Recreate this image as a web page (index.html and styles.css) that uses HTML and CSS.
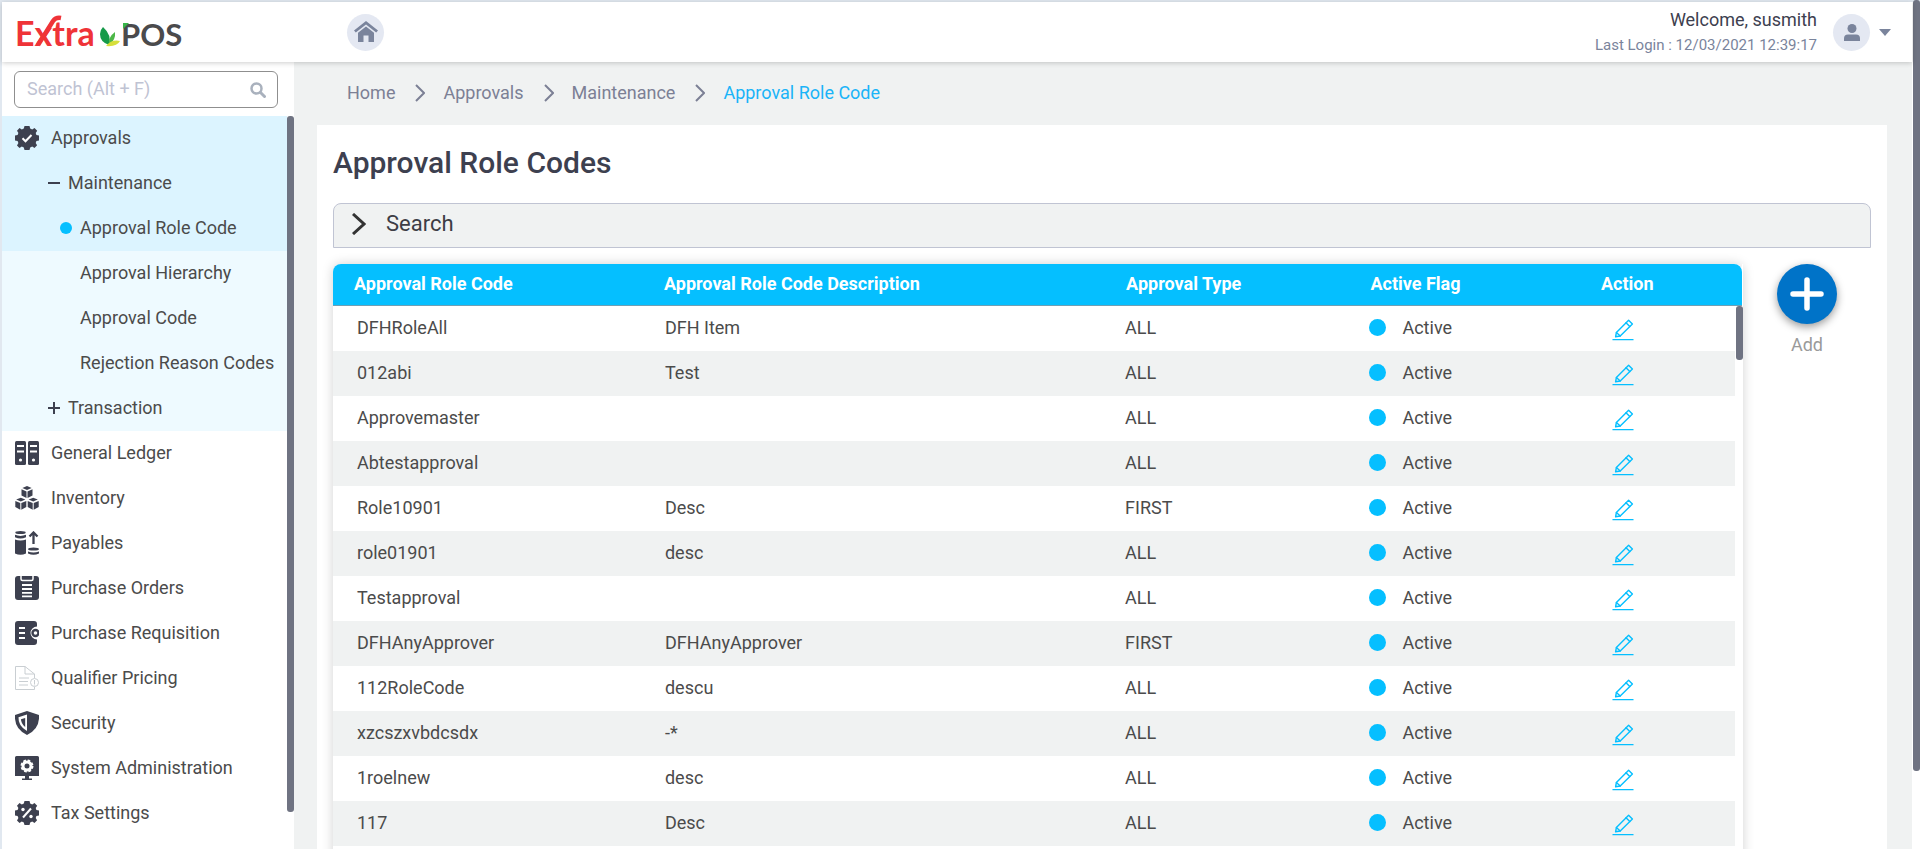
FILE: index.html
```html
<!DOCTYPE html>
<html lang="en">
<head>
<meta charset="utf-8">
<title>Approval Role Codes</title>
<link rel="stylesheet" href="styles.css">
</head>
<body>
<svg class="sprite" aria-hidden="true">
  <symbol id="i-edit" viewBox="0 0 22 22">
    <g fill="none" stroke="currentColor" stroke-width="1.4" stroke-linejoin="round" stroke-linecap="round">
      <path d="M3.6 17.8 4.4 13.400 16.600 1.200 20.400 5 8.200 17Z"/>
      <path d="M14 3.800 17.800 7.600M4.400 13.400 8.200 17"/>
      <path d="M1 20.700H21" stroke-width="1.300"/>
    </g>
  </symbol>
  <symbol id="i-cog" viewBox="0 0 24 24">
    <path fill="currentColor" d="M9.5 0h5l.7 2.6 2 .8L19.500 2l2.700 2.700-1.500 2.300.7 2 2.600.500v5l-2.600.6-.7 2 1.400 2.200L19.500 22l-2.300-1.400-2 .8-.7 2.600h-5l-.7-2.600-2-.8L4.500 22 2 19.500l1.400-2.400-.8-2L0 14.500v-5L2.600 9l.8-2L2 4.700 4.500 2l2.300 1.400 2-.8Z"/>
  </symbol>
</svg>
<div class="app">
  <header class="topbar">
    <a class="brand" href="#" aria-label="Extra POS">
      <svg class="logo" viewBox="0 0 180 60" width="180" height="60">
        <text class="logo-red" x="5" y="44">Extra</text>
        <path d="M28 43 43 19Q46 15 51 16" fill="none" stroke="#ef3338" stroke-width="4.500"/>
        <path fill="#169a49" d="M93 25q9 8 6 18q-9-3-9-11q0-4 3-7Z"/>
        <path fill="#4cb748" d="M105 30q-7 5-6 13q7-5 6-13Z"/>
        <path fill="#d6df3a" d="M96 44q6-7 14-5q-3 6-14 5Z"/>
        <text class="logo-grey" x="111" y="44">POS</text>
        <path fill="#39b54a" d="M113 21h6l-6 6Z"/>
      </svg>
    </a>
    <a class="round" href="#" aria-label="Home">
      <svg viewBox="0 0 24 22" width="24" height="22" fill="currentColor"><path d="M12 0 24 9.500 22.200 11.600 12 3.600 1.800 11.600 0 9.500Z"/><path d="M12 5.500 20 11.800V21H14.500V14.500H9.500V21H4V11.800Z"/></svg>
    </a>
    <div class="who"><span class="welcome">Welcome, susmith</span><span class="login">Last Login : 12/03/2021 12:39:17</span></div>
    <button class="account" type="button" aria-label="Account">
      <span class="round"><svg viewBox="0 0 16 17" width="16" height="17" fill="currentColor"><circle cx="8" cy="4.500" r="4.500"/><path d="M0 17v-2.500Q0 10.500 4 10.500h8q4 0 4 4V17Z"/></svg></span>
      <svg viewBox="0 0 12 7" width="12" height="7" fill="currentColor"><path d="M0 0H12L6 7Z"/></svg>
    </button>
  </header>
  <div class="body">
    <aside class="side">
      <div class="find">
        <input type="text" aria-label="Search menu" placeholder="Search (Alt + F)">
        <svg viewBox="0 0 16 16" width="16" height="16"><circle cx="6.500" cy="6.500" r="5" fill="none" stroke="#a9b1bd" stroke-width="2.500"/><path d="m10.500 10.500 4 4" stroke="#a9b1bd" stroke-width="3" stroke-linecap="round"/></svg>
      </div>
      <nav class="menu">
        <div class="group on">
          <a href="#"><svg class="ico" viewBox="0 0 24 24"><use href="#i-cog"/><path d="m7.500 12.300 3 3 6-6.300" fill="none" stroke="#fff" stroke-width="2"/></svg>Approvals</a>
          <a class="sub" href="#"><svg class="sign" viewBox="0 0 12 12"><path d="M0 6H12"/></svg>Maintenance</a>
          <a class="leaf" href="#"><span class="bullet"></span>Approval Role Code</a>
        </div>
        <div class="group open">
          <a class="leaf" href="#">Approval Hierarchy</a>
          <a class="leaf" href="#">Approval Code</a>
          <a class="leaf" href="#">Rejection Reason Codes</a>
          <a class="sub" href="#"><svg class="sign" viewBox="0 0 12 12"><path d="M0 6H12M6 0V12"/></svg>Transaction</a>
        </div>
        <div class="group">
          <a href="#"><svg class="ico" viewBox="0 0 24 24" fill="currentColor"><rect width="11" height="24" rx="1.500"/><rect x="13" width="11" height="24" rx="1.500"/><path stroke="#fff" stroke-width="2" d="M2 5H9M2 10.500H9M15 5h7M15 10.500h7"/><circle cx="5.500" cy="19" r="1.600" fill="#fff"/><circle cx="18.500" cy="19" r="1.600" fill="#fff"/></svg>General Ledger</a>
          <a href="#"><svg class="ico" viewBox="0 0 24 24" fill="currentColor"><g id="cube"><path d="m12 0 4.600 1.900L12 3.900 7.400 1.900Z"/><path d="m6.500 3.200 5 2.200V12l-5-2.600Z"/><path d="m17.500 3.200-5 2.200V12l5-2.600Z"/></g><use href="#cube" x="-6.200" y="11.700"/><use href="#cube" x="6.200" y="11.700"/></svg>Inventory</a>
          <a href="#"><svg class="ico" viewBox="0 0 24 24" fill="currentColor"><ellipse cx="5.500" cy="1.500" rx="5.200" ry="1.500"/><path d="M0 3.800q5.500 2.200 11 0v2.400q-5.500 2.400-11 0ZM0 8.500q5.500 2.200 11 0V22.500q-5.500 2.500-11 0Z"/><path d="M18.500 13V2M14.500 5.500 18.500 1.500 22.500 5.500" fill="none" stroke="currentColor" stroke-width="2.300"/><ellipse cx="18.500" cy="18" rx="5.500" ry="1.600"/><path d="M13 20.500q5.500 2 11 0v2q-5.500 2.500-11 0Z"/></svg>Payables</a>
          <a href="#"><svg class="ico" viewBox="0 0 24 24" fill="currentColor"><rect width="24" height="24" rx="3"/><path d="M6 0v3q0 1.500 1.500 1.500h9Q18 4.500 18 3V0" fill="none" stroke="#fff" stroke-width="1.500"/><path d="M7 9H17M7 13H17M7 16.800H17M7 20.300H17" stroke="#fff" stroke-width="1.800"/></svg>Purchase Orders</a>
          <a href="#"><svg class="ico" viewBox="0 0 24 24" fill="currentColor"><path d="M3 0H19q3 0 3 3V5.500a6.500 6.500 0 0 0 0 13V21q0 3-3 3H3q-3 0-3-3V3Q0 0 3 0Z"/><path d="M4 7h6M4 12h6M4 17h6" stroke="#fff" stroke-width="2"/><circle cx="20.500" cy="12" r="3" fill="none" stroke="currentColor" stroke-width="2.400"/></svg>Purchase Requisition</a>
          <a href="#"><svg class="ico pale" viewBox="0 0 24 24" fill="none" stroke="currentColor"><path d="M19.500 12V8L10 .5H.5V23.500H19.500V21M10 .5V8H19.500M4 12H14M4 15.500H13M4 19H13"/><circle cx="19.500" cy="16.500" r="4"/><path d="M19.500 14V18M19.500 18.500v1"/></svg>Qualifier Pricing</a>
          <a href="#"><svg class="ico" viewBox="0 0 24 24" fill="currentColor"><path d="M12 0 24 4Q25 18 12 24Q-1 18 0 4Z"/><path d="M12 3.500V20Q3 15 3.500 6.300Z" fill="#fff"/><path d="M10.200 7V16Q6 12.500 6 8.300Z"/></svg>Security</a>
          <a href="#"><svg class="ico" viewBox="0 0 24 24" fill="currentColor"><path d="M1.500 0h21Q24 0 24 1.500V20H14v2.500h3V24H7v-1.500h3V20H0V1.500Q0 0 1.500 0Z"/><circle cx="12" cy="10" r="5.500" fill="none" stroke="#fff" stroke-width="2" stroke-dasharray="2.600 1.720"/><circle cx="12" cy="10" r="4" fill="none" stroke="#fff" stroke-width="3"/></svg>System Administration</a>
          <a href="#"><svg class="ico" viewBox="0 0 24 24"><use href="#i-cog"/><path d="m8 16.500 8-9" stroke="#fff" stroke-width="2"/><circle cx="8" cy="8.500" r="1.700" fill="#fff"/><circle cx="16" cy="15.500" r="1.700" fill="#fff"/></svg>Tax Settings</a>
        </div>
        <span class="thumb"></span>
      </nav>
    </aside>
    <main class="main">
      <nav class="crumbs" aria-label="Breadcrumb">
        <a href="#">Home</a><svg viewBox="0 0 10 18"><path d="m1 1 8 8-8 8"/></svg>
        <a href="#">Approvals</a><svg viewBox="0 0 10 18"><path d="m1 1 8 8-8 8"/></svg>
        <a href="#">Maintenance</a><svg viewBox="0 0 10 18"><path d="m1 1 8 8-8 8"/></svg>
        <a class="here" href="#">Approval Role Code</a>
      </nav>
      <section class="card">
        <h1>Approval Role Codes</h1>
        <button class="panel" type="button"><svg viewBox="0 0 14 22"><path d="m1 1 11 10L1 21"/></svg>Search</button>
        <div class="content">
          <div class="grid">
            <table>
              <colgroup><col class="c1"><col class="c2"><col class="c3"><col class="c4"><col class="c5"></colgroup>
              <thead><tr><th>Approval Role Code</th><th>Approval Role Code Description</th><th>Approval Type</th><th>Active Flag</th><th>Action</th></tr></thead>
              <tbody id="rows"></tbody>
            </table>
            <span class="thumb"></span>
          </div>
          <div class="add">
            <button type="button" id="add" aria-label="Add"><svg viewBox="0 0 34 34" width="34" height="34"><path d="M17 3V31M3 17H31" stroke="#fff" stroke-width="5.500" stroke-linecap="round"/></svg></button>
            <label for="add">Add</label>
          </div>
        </div>
      </section>
    </main>
  </div>
  <span class="thumb page-thumb"></span>
</div>
<script src="rows.js"></script>
</body>
</html>
```
FILE: rows.js
```js
const rows = [
  ["DFHRoleAll", "DFH Item", "ALL"],
  ["012abi", "Test", "ALL"],
  ["Approvemaster", "", "ALL"],
  ["Abtestapproval", "", "ALL"],
  ["Role10901", "Desc", "FIRST"],
  ["role01901", "desc", "ALL"],
  ["Testapproval", "", "ALL"],
  ["DFHAnyApprover", "DFHAnyApprover", "FIRST"],
  ["112RoleCode", "descu", "ALL"],
  ["xzcszxvbdcsdx", "-*", "ALL"],
  ["1roelnew", "desc", "ALL"],
  ["117", "Desc", "ALL"]
];
document.getElementById("rows").innerHTML = rows.map(([code, desc, type]) =>
  `<tr><td>${code}</td><td>${desc}</td><td>${type}</td>` +
  `<td><span class="flag"><span class="dot"></span>Active</span></td>` +
  `<td><button class="edit" type="button" aria-label="Edit ${code}"><svg width="22" height="22"><use href="#i-edit"/></svg></button></td></tr>`
).join("");
```
FILE: styles.css
```css
* { box-sizing: border-box; }
body {
  margin: 0;
  font: 18px/24px Roboto, "Liberation Sans", sans-serif;
  color: #4b4b4b;
  overflow: hidden;
}
a { color: inherit; text-decoration: none; }
button { font: inherit; color: inherit; background: none; border: 0; padding: 0; cursor: pointer; }
.sprite { position: absolute; width: 0; height: 0; }
.thumb { position: absolute; right: 0; top: 0; width: 7px; border-radius: 3px; background: #6f7382; }

.app {
  position: relative;
  height: 100vh;
  display: flex;
  flex-direction: column;
  border: 2px solid #e1e8f0;
  border-width: 2px 0 0 2px;
  padding-right: 8px;
}
.page-thumb { top: -2px; height: 91%; }

.topbar {
  position: relative;
  z-index: 1;
  flex: none;
  height: 60px;
  display: flex;
  align-items: center;
  background: #fff;
  box-shadow: 0 1px 5px rgba(0, 0, 0, .2);
  padding-right: 21px;
}
.brand { width: 345px; padding-left: 8px; }
.logo { display: block; }
.logo text { font: 700 34px Lato, sans-serif; }
.logo .logo-grey { font-size: 31px; fill: #4a4a4c; }
.logo-red { fill: #ef3338; }
.round {
  width: 37px;
  height: 37px;
  border-radius: 50%;
  background: #e4e8f2;
  color: #7a849c;
  display: flex;
  align-items: center;
  justify-content: center;
}
.who { margin-left: auto; display: flex; flex-direction: column; align-items: flex-end; }
.welcome { color: #3d404f; }
.login { font-size: 15px; padding-top: 1px; color: #7a849c; }
.account { display: flex; align-items: center; gap: 9px; margin-left: 16px; color: #7a849c; }

.body { flex: 1; min-height: 0; display: flex; }
.side { width: 292px; flex: none; background: #fff; display: flex; flex-direction: column; }
.find { position: relative; padding: 9px 16px 8px 12px; }
.find input {
  display: block;
  width: 100%;
  height: 37px;
  border: 1px solid #8f8f8f;
  border-radius: 6px;
  padding: 0 44px 2px 12px;
  font: inherit;
}
.find input::placeholder { color: #bfc3d3; }
.find svg { position: absolute; right: 28px; top: 20px; }
.menu { position: relative; flex: 1; }
.menu .thumb { height: 95%; }
.group { margin-right: 7px; }
.group.on { background: #dcf4ff; }
.group.open { background: #eefaff; }
.group a { display: flex; align-items: center; height: 45px; padding: 0 0 2px 13px; color: #4b4b4b; white-space: nowrap; }
.group .sub { padding-left: 46px; }
.group .leaf { padding-left: 78px; }
.bullet { width: 12px; height: 12px; border-radius: 50%; background: #05bfff; margin: 0 8px 0 -20px; }
.ico { width: 24px; height: 24px; margin-right: 12px; color: #3d404f; }
.ico.pale { color: #c9ced2; }
.sign { width: 12px; height: 12px; margin-right: 8px; stroke: #3d404f; stroke-width: 2; }

.main { flex: 1; min-width: 0; background: #f0f2f2; padding: 0 25px 0 23px; display: flex; flex-direction: column; }
.crumbs { display: flex; align-items: center; height: 63px; padding: 0 0 2px 30px; color: #7c8095; flex: none; }
.crumbs svg { width: 10px; height: 18px; margin: 0 18px 0 20px; fill: none; stroke: #7c8095; stroke-width: 2; }
.crumbs .here { color: #1ab4f8; }

.card { flex: 1; min-height: 0; background: #fff; padding: 20px 16px 0; }
h1 { margin: 0 0 22px; font-size: 30px; line-height: 36px; font-weight: 500; color: #3d404f; }
.panel {
  display: flex;
  align-items: center;
  width: 100%;
  height: 45px;
  padding: 0 18px 3px;
  border: 1px solid #c0c4d3;
  border-radius: 8px 8px 0 0;
  background: #f0f2f2;
  font-size: 22px;
  color: #3d3d45;
}
.panel svg { width: 14px; height: 22px; margin-right: 20px; fill: none; stroke: #333; stroke-width: 3; }
.content { display: flex; margin-top: 16px; }
.grid { position: relative; flex: 1; min-height: 600px; border-radius: 8px 8px 0 0; box-shadow: 0 0 12px rgba(0, 0, 0, .18); }
.grid .thumb { top: 42px; height: 54px; }
table { width: 100%; border-collapse: separate; border-spacing: 0; table-layout: fixed; border-right: 1px solid #fff; }
.c1 { width: 22%; }
.c2 { width: 32.8%; }
.c3 { width: 17.2%; }
.c4 { width: 16.5%; }
th {
  height: 42px;
  padding: 0 0 2px 21px;
  background: #05bfff;
  border-bottom: 1px solid #6f9fb4;
  color: #fff;
  font-weight: 700;
  text-align: left;
}
th:first-child { border-top-left-radius: 8px; }
th:last-child { border-top-right-radius: 8px; }
th:nth-child(4) { padding-left: 23px; }
td { height: 45px; padding: 0 0 2px 22px; }
td:first-child { padding-left: 24px; }
td:nth-child(3) { padding-left: 20px; }
tr:nth-child(even) td { background: #f0f2f2; }
td:last-child { padding: 2px 0 0 32px; border-right: 7px solid #fff; }
.flag { display: flex; align-items: center; gap: 16px; }
.dot { width: 17px; height: 17px; border-radius: 50%; background: #05bfff; }
.edit { display: block; color: #05bfff; }
.edit svg { display: block; }
.add { width: 128px; flex: none; display: flex; flex-direction: column; align-items: center; color: #9a9a9a; }
.add button {
  width: 60px;
  height: 60px;
  border-radius: 50%;
  background: #0073c8;
  box-shadow: 0 3px 8px rgba(0, 0, 0, .4);
  display: flex;
  align-items: center;
  justify-content: center;
  margin-bottom: 9px;
}
```
